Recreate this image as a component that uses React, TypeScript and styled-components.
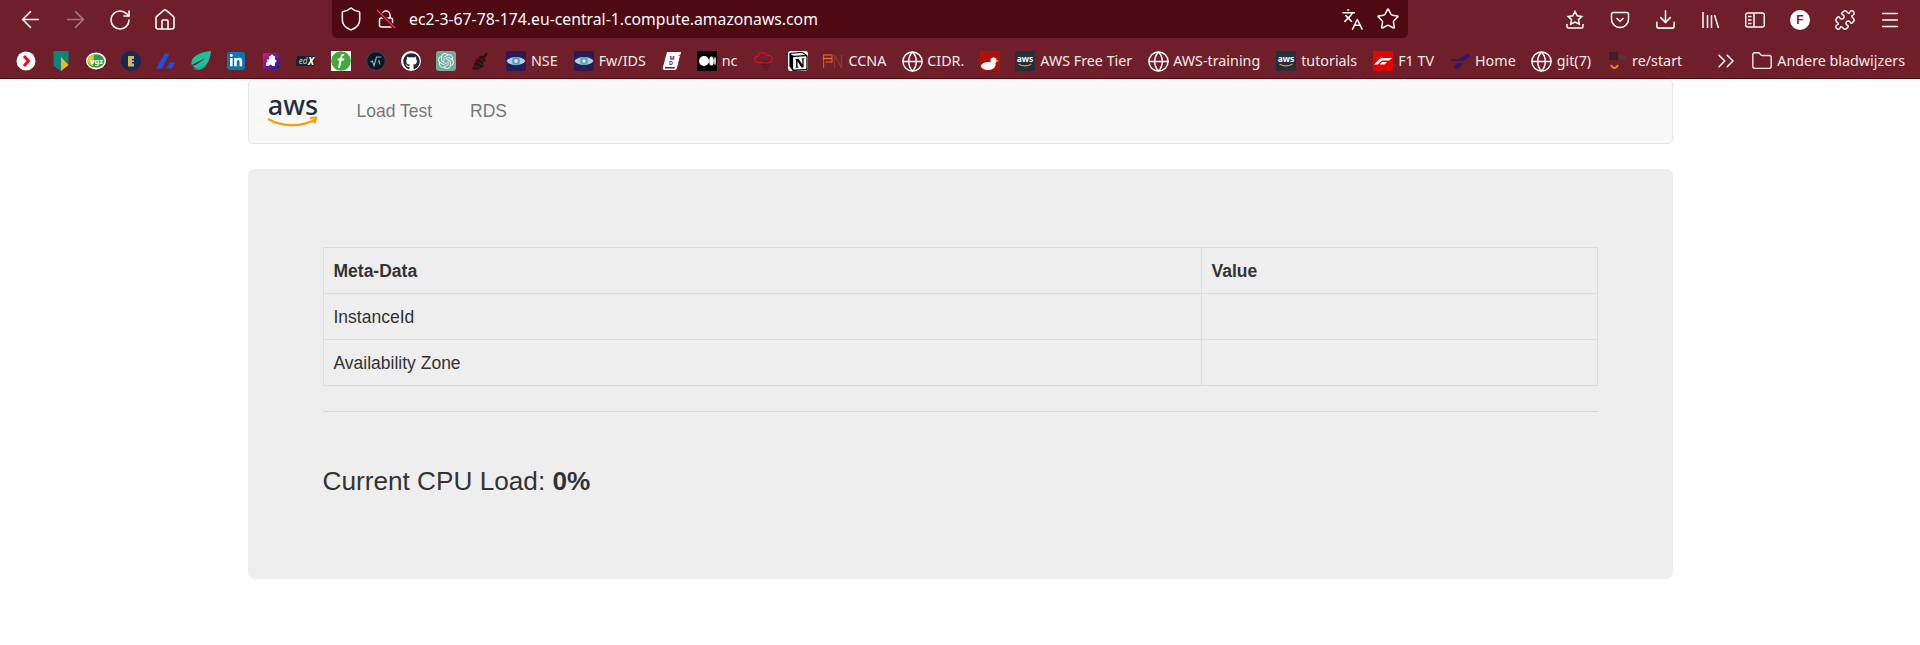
import React from 'react';
import styled, { createGlobalStyle } from 'styled-components';
import {
  ArrowLeft,
  ArrowRight,
  ChevronsRight,
  Download,
  Folder,
  Globe,
  Home,
  Languages,
  Menu,
  Puzzle,
  RotateCw,
  Shield,
  Star
} from 'lucide-react';
import { FaGithub, FaLinkedinIn } from 'react-icons/fa';
import { SiNotion, SiOpenai } from 'react-icons/si';

const GlobalStyle = createGlobalStyle`
  html, body {
    margin: 0;
    padding: 0;
    background: #fff;
  }
  body {
    font-family: "Liberation Sans", Arial, sans-serif;
    color: #333;
    overflow: hidden;
  }
`;

const BrowserChrome = styled.header`
  background: #6e1f2a;
  border-bottom: 1px solid #4f0a11;
  height: 78px;
  font-family: "Noto Sans", "Open Sans", sans-serif;
  color: #fbfbfe;
`;

const Toolbar = styled.div`
  height: 39px;
  display: flex;
  align-items: flex-start;
  justify-content: space-between;
  padding: 0 7.5px;
`;

const ButtonGroup = styled.div`
  display: flex;
  align-items: center;
  height: 39px;
`;

const ToolButton = styled.span<{ $dim?: boolean }>`
  width: 45px;
  height: 39px;
  display: flex;
  align-items: center;
  justify-content: center;
  opacity: ${(p) => (p.$dim ? 0.4 : 1)};
`;

const UrlBar = styled.div`
  width: 1076px;
  height: 38px;
  margin-left: 144.5px;
  margin-right: auto;
  box-sizing: border-box;
  padding: 0 8px 0 6px;
  background: #4f0a11;
  border-radius: 0 0 5px 5px;
  display: flex;
  align-items: center;
  gap: 12px;
`;

const UrlText = styled.span`
  font-size: 15.75px;
  margin-left: 1px;
  flex: 1;
  white-space: nowrap;
`;

const UrlActions = styled.div`
  display: flex;
  align-items: center;
  gap: 12px;
`;

const Avatar = styled.span`
  width: 20px;
  height: 20px;
  border-radius: 50%;
  background: #fff;
  color: #6e1f2a;
  font: bold 12px "Liberation Sans", sans-serif;
  display: flex;
  align-items: center;
  justify-content: center;
`;

const BookmarkBar = styled.nav`
  height: 39px;
  box-sizing: border-box;
  padding: 5px 15px 0 16px;
  display: flex;
  align-items: center;
  justify-content: space-between;
`;

const BookmarkList = styled.div`
  display: flex;
  align-items: center;
  gap: 15px;
`;

const Bookmark = styled.span`
  display: flex;
  align-items: center;
  gap: 5px;
  font-size: 14.3px;
  line-height: 20px;
  white-space: nowrap;
  color: #f5e9ea;
`;

const BookmarkLabel = styled.span`
  margin-right: 1px;
`;

const Favicon = styled.svg`
  width: 20px;
  height: 20px;
  display: block;
  flex: none;
`;

const IconTile = styled.span<{ $bg: string; $color?: string; $round?: boolean; $size?: number }>`
  width: ${(p) => p.$size ?? 20}px;
  height: ${(p) => p.$size ?? 20}px;
  margin: ${(p) => (20 - (p.$size ?? 20)) / 2}px;
  flex: none;
  display: flex;
  align-items: center;
  justify-content: center;
  background: ${(p) => p.$bg};
  color: ${(p) => p.$color ?? '#fff'};
  border-radius: ${(p) => (p.$round ? '50%' : '3px')};
`;

const BookmarkGlobe = styled(Globe)`
  margin: -1.5px;
  color: #fff;
  flex: none;
`;

const FolderIcon = styled(Folder)`
  margin: -1px;
  flex: none;
`;

const OverflowGroup = styled.div`
  display: flex;
  align-items: center;
  gap: 12px;
`;

const Container = styled.main`
  width: 1425px;
  margin: 0 auto;
`;

const Navbar = styled.div`
  height: 65px;
  box-sizing: border-box;
  display: flex;
  align-items: center;
  padding-left: 18px;
  background: #f8f8f8;
  border: 1px solid #e7e7e7;
  border-radius: 5px;
  margin-bottom: 25px;
`;

const Brand = styled.svg`
  width: 52px;
  height: 36px;
  display: block;
  margin-right: 38px;
`;

const NavLink = styled.a`
  font-size: 17.5px;
  color: #777;
  margin-right: 38px;
`;

const Jumbotron = styled.section`
  height: 410px;
  box-sizing: border-box;
  padding: 78px 75px 0;
  background: #eee;
  border-radius: 7px;
`;

const MetaTable = styled.table`
  width: 100%;
  border-collapse: collapse;
  table-layout: fixed;
  font-size: 17.5px;
  line-height: 25px;
`;

const Cell = styled.td`
  height: 46px;
  box-sizing: border-box;
  padding: 2px 10px 0;
  border: 1.5px solid #ddd;
  text-align: left;
`;

const HeadCell = styled(Cell).attrs({ as: 'th' })`
  font-weight: bold;
`;

const Rule = styled.hr`
  margin: 25px 0 0;
  border: 0;
  border-top: 1px solid #d8d8d8;
`;

const CpuLoad = styled.h3`
  margin: 53px 0 0;
  font-size: 26.2px;
  font-weight: 400;
  line-height: 32px;
`;

const LockOff = () => (
  <svg width="20" height="20" viewBox="0 0 20 20" fill="none" stroke="#fbfbfe" strokeWidth="1.5">
    <path d="M6 9V6a4 4 0 0 1 8 0v3" />
    <rect x="3.5" y="9" width="13" height="9" rx="2" />
    <path d="M1 1l18 18" stroke="#4f0a11" strokeWidth="3.5" />
    <path d="M1 1l18 18" stroke="#ff2a55" />
  </svg>
);

const SaveStar = () => (
  <svg width="20" height="20" viewBox="0 0 20 20" fill="none" stroke="#fbfbfe" strokeWidth="1.5">
    <path d="M10 1.500l2.200 4.200 4.600.7-3.300 3.200.8 4.600-4.300-2.200-4.300 2.200.8-4.600-3.300-3.200 4.600-.7z" />
    <path d="M2 14v2.500a1.500 1.500 0 0 0 1.500 1.500h13a1.500 1.500 0 0 0 1.500-1.500V14" />
  </svg>
);

const Pocket = () => (
  <svg width="20" height="20" viewBox="0 0 20 20" fill="none" stroke="#fbfbfe" strokeWidth="1.5">
    <path d="M3 2.500h14a1.500 1.500 0 0 1 1.500 1.500v5a8.500 8.500 0 0 1-17 0V4A1.500 1.500 0 0 1 3 2.500z" />
    <path d="M6.500 8l3.500 3.300L13.500 8" />
  </svg>
);

const Library = () => (
  <svg width="20" height="20" viewBox="0 0 20 20" fill="none" stroke="#fbfbfe" strokeWidth="1.5">
    <path d="M3 2v16M7.500 5v13M11.500 5v13M14.500 5l4 13" />
  </svg>
);

const Sidebar = () => (
  <svg width="20" height="20" viewBox="0 0 20 20" fill="none" stroke="#fbfbfe" strokeWidth="1.5">
    <rect x="0.7" y="3" width="18.6" height="14" rx="2" />
    <path d="M9 3v14" />
    <path d="M3 6.500h3.500M3 10h3.500M3 13.500h3.500" strokeWidth="1.6" />
  </svg>
);

const AwsTile = () => (
  <Favicon viewBox="0 0 20 20">
    <rect width="20" height="20" fill="#232f3e" />
    <text x="10" y="11" textAnchor="middle" fontSize="8.5" fontWeight="bold" fill="#fff" fontFamily="Noto Sans">
      aws
    </text>
    <path d="M3.500 13c4 2.400 9 2.400 13 0" stroke="#f90" strokeWidth="1.2" fill="none" />
  </Favicon>
);

const EyeTile = () => (
  <Favicon viewBox="0 0 20 20">
    <rect width="20" height="20" rx="2" fill="#2a1a55" />
    <path d="M0.500 10C4 4.500 16 4.500 19.500 10 16 15.500 4 15.500 0.500 10z" fill="#a9d3e4" />
    <circle cx="10" cy="10" r="4" fill="#5c9fbd" />
    <circle cx="10" cy="10" r="1.8" fill="#dceff6" />
  </Favicon>
);

const GlobeIcon = () => <BookmarkGlobe size={23} strokeWidth={1.5} />;

type BookmarkItem = { icon: React.ReactNode; label?: string };

const BOOKMARKS: BookmarkItem[] = [
  {
    icon: (
      <Favicon viewBox="0 0 20 20">
        <circle cx="10" cy="10" r="9.500" fill="#fff" />
        <path d="M8 5l4.500 5L8 15" stroke="#e0101c" strokeWidth="3" fill="none" />
      </Favicon>
    )
  },
  {
    icon: (
      <Favicon viewBox="0 0 20 20">
        <path d="M2.500 0h15v14l-7.500 6-7.500-5z" fill="#0b8579" />
        <path d="M10 6l7.500 8-7.500 6z" fill="#f4b41a" />
      </Favicon>
    )
  },
  {
    icon: (
      <Favicon viewBox="0 0 20 20">
        <ellipse cx="10" cy="10" rx="10" ry="8.500" fill="#fff" />
        <ellipse cx="10" cy="10" rx="8.500" ry="6.800" fill="#2f9a52" />
        <path d="M2 10c0-4 3-6 6-6l-1 11c-3-1-5-2-5-5z" fill="#d8d21e" />
        <text x="10.500" y="12.500" textAnchor="middle" fontSize="7.5" fontWeight="bold" fill="#fff" fontFamily="Noto Sans">
          vgz
        </text>
      </Favicon>
    )
  },
  {
    icon: (
      <Favicon viewBox="0 0 20 20">
        <circle cx="10" cy="10" r="10" fill="#102c57" />
        <path d="M7 5h6v3h-2v1.500h2v1.500h-2v1.500h2v3H7z" fill="#d9b25c" />
      </Favicon>
    )
  },
  {
    icon: (
      <Favicon viewBox="0 0 20 20">
        <path d="M0 17.500L9 2.500h4.500L6 17.500z" fill="#1d4fe8" />
        <path d="M10.500 17.500l3-6h5.500l-3 6z" fill="#1d4fe8" />
      </Favicon>
    )
  },
  {
    icon: (
      <Favicon viewBox="0 0 20 20">
        <path d="M20 0c-1 8-3 16-12 17-3 .3-5.500-.5-6.500-2C6 14 11 10 14 7 10 9 5 12 .8 14 -1.500 8 6 1 20 0z" fill="#17c39a" />
        <path d="M2 17.500c5 2.500 11 1 14-4-3 2.500-8 4.500-14 4z" fill="#17c39a" />
      </Favicon>
    )
  },
  {
    icon: (
      <IconTile $bg="#0a76b4" $size={18}>
        <FaLinkedinIn size={14} />
      </IconTile>
    )
  },
  {
    icon: (
      <Favicon viewBox="0 0 20 20">
        <defs>
          <linearGradient id="puzzleTile" x1="0" y1="0" x2="1" y2="1">
            <stop offset="0" stopColor="#e0127c" />
            <stop offset="1" stopColor="#1a1aa0" />
          </linearGradient>
        </defs>
        <rect x="2" y="2" width="16" height="16" fill="url(#puzzleTile)" />
        <path d="M8 5h1.500a1.500 1.500 0 0 1 3 0H14v3.500a1.500 1.500 0 0 1 0 3V15h-3a1.500 1.500 0 0 0-3 0H5v-3.500a1.500 1.500 0 0 0 0-3H8z" fill="#fff" />
      </Favicon>
    )
  },
  {
    icon: (
      <Favicon viewBox="0 0 20 20">
        <path d="M1 5h18l-1 10H0z" fill="#10262e" />
        <text x="7" y="12.500" textAnchor="middle" fontSize="8" fontStyle="italic" fill="#cfd8dc" fontFamily="Noto Sans">
          ed
        </text>
        <text x="15" y="14" textAnchor="middle" fontSize="10" fontWeight="bold" fontStyle="italic" fill="#fff" fontFamily="Noto Sans">
          X
        </text>
      </Favicon>
    )
  },
  {
    icon: (
      <Favicon viewBox="0 0 20 20">
        <rect width="20" height="20" fill="#fff" />
        <circle cx="10" cy="10" r="9.800" fill="#43a83e" />
        <path d="M10.500 3.500c1-.8 2.500-.6 3 .2l-1 1.300c-.6-.3-1-.2-1.200.6L11 7.500h2.500L13 9.500h-2.500L9 17H7l1.500-7.500H6.500L7 7.500h2z" fill="#fff" />
      </Favicon>
    )
  },
  {
    icon: (
      <Favicon viewBox="0 0 20 20">
        <circle cx="10" cy="10" r="9.300" fill="#0e1720" stroke="#3a3f78" strokeWidth="1" />
        <path d="M4.500 11l1.800-1 1.700 4.500L10.500 6h5" stroke="#6fb8d8" strokeWidth="1.200" fill="none" />
        <path d="M12 11.500l1-2 1 4" stroke="#6fb8d8" strokeWidth="1" fill="none" />
      </Favicon>
    )
  },
  {
    icon: (
      <IconTile $bg="#fff" $color="#24292e" $round>
        <FaGithub size={17} />
      </IconTile>
    )
  },
  {
    icon: (
      <IconTile $bg="#74aa9c" $color="#e6f2ee">
        <SiOpenai size={16} />
      </IconTile>
    )
  },
  {
    icon: (
      <Favicon viewBox="0 0 20 20">
        <path d="M16 1c1.500 3-1 5-2.500 6L15 10l-3 2 1 3-4 3-5 1-3-1 2-4 2-5 4-4 3 0z" fill="#2a1114" />
        <path d="M5 10l8 5M7 7l7 4M3 15l7 2" stroke="#6e1f2a" strokeWidth=".8" />
      </Favicon>
    )
  },
  { icon: <EyeTile />, label: 'NSE' },
  { icon: <EyeTile />, label: 'Fw/IDS' },
  {
    icon: (
      <Favicon viewBox="0 0 20 20">
        <path d="M5 1h14L15 17c-.3 1-1 2-2.500 2H2.500C1 19 .3 17.500 1 16z" fill="#fff" />
        <path d="M3 16h10l-.5 1.500H3z" fill="#6e1f2a" />
        <path d="M16.500 4l2 1-3 13" stroke="#6e1f2a" strokeWidth=".7" fill="none" />
        <text x="10" y="8.500" textAnchor="middle" fontSize="5.500" fontWeight="bold" fill="#6e1f2a" fontFamily="Noto Sans">
          M
        </text>
        <text x="9" y="13.500" textAnchor="middle" fontSize="5.500" fontWeight="bold" fill="#6e1f2a" fontFamily="Noto Sans">
          D
        </text>
      </Favicon>
    )
  },
  {
    icon: (
      <Favicon viewBox="0 0 20 20">
        <rect width="20" height="20" fill="#000" />
        <ellipse cx="7" cy="10" rx="5" ry="5" fill="#fff" />
        <ellipse cx="14.500" cy="10" rx="2.300" ry="4.500" fill="#fff" />
        <ellipse cx="18" cy="10" rx=".8" ry="4" fill="#fff" />
      </Favicon>
    ),
    label: 'nc'
  },
  {
    icon: (
      <Favicon viewBox="0 0 20 20">
        <path d="M5 11.500a3 3 0 0 1-.5-6 5 5 0 0 1 9.500-.8 3.500 3.500 0 0 1 3 6.800z" fill="none" stroke="#c8161d" strokeWidth="1.300" />
        <path d="M9 10.500h7M8 13.500h9M10 16h6M11 18.500h4" stroke="#5a1a20" strokeWidth="1.300" />
      </Favicon>
    )
  },
  {
    icon: (
      <IconTile $bg="#fff" $color="#000">
        <SiNotion size={19} />
      </IconTile>
    )
  },
  {
    icon: (
      <Favicon viewBox="0 0 20 20">
        <path d="M.5 17V4h8.500v7H2.500" fill="none" stroke="#d2542c" strokeWidth="1.300" />
        <path d="M11.500 17V4l7 13V4" fill="none" stroke="#8a3a34" strokeWidth="1.300" />
        <path d="M0 7.500h9" stroke="#e8782c" strokeWidth="1.300" />
      </Favicon>
    ),
    label: 'CCNA'
  },
  { icon: <GlobeIcon />, label: 'CIDR.' },
  {
    icon: (
      <Favicon viewBox="0 0 20 20">
        <rect width="20" height="20" fill="#ad1109" />
        <ellipse cx="8" cy="15" rx="7" ry="4" fill="#fff" />
        <circle cx="13.500" cy="9.500" r="3" fill="#fff" />
        <rect x="12" y="10" width="3.500" height="5" fill="#fff" />
        <path d="M16 9l3.500 1-3.500 1z" fill="#f4b41a" />
      </Favicon>
    )
  },
  { icon: <AwsTile />, label: 'AWS Free Tier' },
  { icon: <GlobeIcon />, label: 'AWS-training' },
  { icon: <AwsTile />, label: 'tutorials' },
  {
    icon: (
      <Favicon viewBox="0 0 20 20">
        <rect width="20" height="20" fill="#e10600" />
        <path d="M1 13.500L6 8.500c1-1 2-1.500 4-1.500h9l-3 2.500H10c-1 0-1.500.3-2 .8l-3.200 3.200zM6.500 13.500L9 11h5l-2.500 2.500z" fill="#fff" />
      </Favicon>
    ),
    label: 'F1 TV'
  },
  {
    icon: (
      <Favicon viewBox="0 0 20 20">
        <path d="M1 8h8l8-5c2-1 4 1 2 3l-5 4H2.500C1 10 .3 9 1 8z" fill="#2d1a6e" />
        <path d="M6 18c-1.500 0-2-1.500-1-3l2-3h6l-3 4c-1 1.500-2.500 2-4 2z" fill="#2d1a6e" />
      </Favicon>
    ),
    label: 'Home'
  },
  { icon: <GlobeIcon />, label: 'git(7)' },
  {
    icon: (
      <Favicon viewBox="0 0 20 20">
        <rect x="2" y="1" width="9" height="8" fill="#3a2326" />
        <rect x="12" y="4" width="7" height="4" fill="#50353a" />
        <path d="M4 14c2 4 5 4 7 0" stroke="#f08a12" strokeWidth="1.800" fill="none" />
      </Favicon>
    ),
    label: 're/start'
  }
];

function App() {
  return (
    <>
      <GlobalStyle />
      <BrowserChrome>
        <Toolbar>
          <ButtonGroup>
            <ToolButton><ArrowLeft size={27} strokeWidth={1.4} /></ToolButton>
            <ToolButton $dim><ArrowRight size={27} strokeWidth={1.4} /></ToolButton>
            <ToolButton><RotateCw size={24} strokeWidth={1.6} /></ToolButton>
            <ToolButton><Home size={24} strokeWidth={1.6} /></ToolButton>
          </ButtonGroup>
          <UrlBar>
            <Shield size={26} strokeWidth={1.4} />
            <LockOff />
            <UrlText>ec2-3-67-78-174.eu-central-1.compute.amazonaws.com</UrlText>
            <UrlActions>
              <Languages size={23} strokeWidth={1.6} />
              <Star size={24} strokeWidth={1.5} />
            </UrlActions>
          </UrlBar>
          <ButtonGroup>
            <ToolButton><SaveStar /></ToolButton>
            <ToolButton><Pocket /></ToolButton>
            <ToolButton><Download size={23} strokeWidth={1.6} /></ToolButton>
            <ToolButton><Library /></ToolButton>
            <ToolButton><Sidebar /></ToolButton>
            <ToolButton><Avatar>F</Avatar></ToolButton>
            <ToolButton><Puzzle size={22} strokeWidth={1.6} /></ToolButton>
            <ToolButton><Menu size={22} strokeWidth={1.6} /></ToolButton>
          </ButtonGroup>
        </Toolbar>
        <BookmarkBar>
          <BookmarkList>
            {BOOKMARKS.map((item, i) => (
              <Bookmark key={i}>
                {item.icon}
                {item.label && <BookmarkLabel>{item.label}</BookmarkLabel>}
              </Bookmark>
            ))}
          </BookmarkList>
          <OverflowGroup>
            <ChevronsRight size={28} strokeWidth={1.3} color="#fff" />
            <Bookmark>
              <FolderIcon size={22} strokeWidth={1.5} />
              Andere bladwijzers
            </Bookmark>
          </OverflowGroup>
        </BookmarkBar>
      </BrowserChrome>
      <Container>
        <Navbar>
          <Brand viewBox="0 0 52 36">
            <text x="26" y="21" textAnchor="middle" fontSize="27" fontWeight="500" fill="#232f3e" fontFamily="Noto Sans">
              aws
            </text>
            <path d="M1 25c14 8 32 8 47 1" stroke="#f90" strokeWidth="2.400" fill="none" />
            <path d="M43 24l6-.5-1.500 6" stroke="#f90" strokeWidth="2" fill="none" />
          </Brand>
          <NavLink>Load Test</NavLink>
          <NavLink>RDS</NavLink>
        </Navbar>
        <Jumbotron>
          <MetaTable>
            <colgroup>
              <col style={{ width: 878 }} />
              <col />
            </colgroup>
            <thead>
              <tr>
                <HeadCell>Meta-Data</HeadCell>
                <HeadCell>Value</HeadCell>
              </tr>
            </thead>
            <tbody>
              <tr>
                <Cell>InstanceId</Cell>
                <Cell />
              </tr>
              <tr>
                <Cell>Availability Zone</Cell>
                <Cell />
              </tr>
            </tbody>
          </MetaTable>
          <Rule />
          <CpuLoad>
            Current CPU Load: <b>0%</b>
          </CpuLoad>
        </Jumbotron>
      </Container>
    </>
  );
}

export default App;
